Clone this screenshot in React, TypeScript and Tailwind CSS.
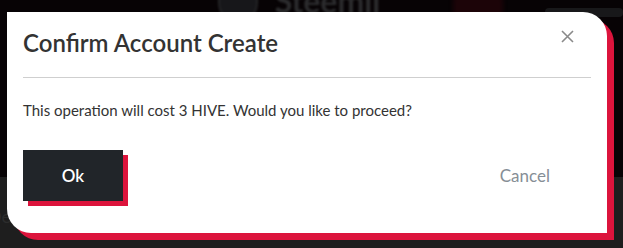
export default function App() {
  return (
    <div className="relative w-[623px] h-[248px] overflow-hidden font-['Lato',sans-serif]">
      {/* dimmed page behind the modal */}
      <div className="h-[177px] bg-[#070305] flex items-start">
        <div className="ml-[218px] -mt-[22px] w-[45px] h-[45px] rounded-full bg-[#17171a] border-2 border-[#242426] blur-[1px]" />
        <div className="ml-[17px] -mt-[15px] text-[32px] font-bold text-[#2c2c2e] blur-[1px] leading-none">Steemll</div>
        <div className="ml-[73px] -mt-[22px] w-[57px] h-[57px] rounded-full bg-[#1c0408] blur-[2px]" />
        <div className="ml-[42px] mt-[8px] w-[90px] h-[9px] rounded bg-[#18181a]" />
      </div>
      <div className="h-[71px] bg-[#1e1e1e] pt-[26px]">
        <span className="text-[18px] text-[#2c2c2c] -ml-[12px]">Der</span>
      </div>

      {/* modal */}
      <div className="absolute left-[7px] top-[12px] w-[600px] h-[221px] bg-white rounded-tr-[24px] rounded-bl-[24px] shadow-[7px_7px_0_#dc143c] flex flex-col">
        <div className="mx-4 pt-4 pb-[19px] border-b border-[#cfcfcf] flex justify-between items-start">
          <h2 className="text-[24px] leading-[30px] font-semibold text-[#333333]">Confirm Account Create</h2>
          <button className="mt-[2px] mr-[17px] w-[13px] h-[13px] text-[#8a8a8a]">
            <svg viewBox="0 0 13 13" width="13" height="13" fill="none" stroke="currentColor" strokeWidth="1.6">
              <path d="M1 1 L12 12 M12 1 L1 12" />
            </svg>
          </button>
        </div>
        <p className="mx-4 pt-5 text-[15px] leading-[24px] text-[#333333]">
          This operation will cost 3 HIVE. Would you like to proceed?
        </p>
        <div className="mt-[28px] pl-4 pr-[57px] flex justify-between items-center">
          <button className="w-[100px] h-[51px] bg-[#212529] shadow-[5px_5px_0_#dc143c] text-white text-[17px] font-semibold">
            Ok
          </button>
          <button className="text-[17px] text-[#868e96]">Cancel</button>
        </div>
      </div>
    </div>
  );
}
